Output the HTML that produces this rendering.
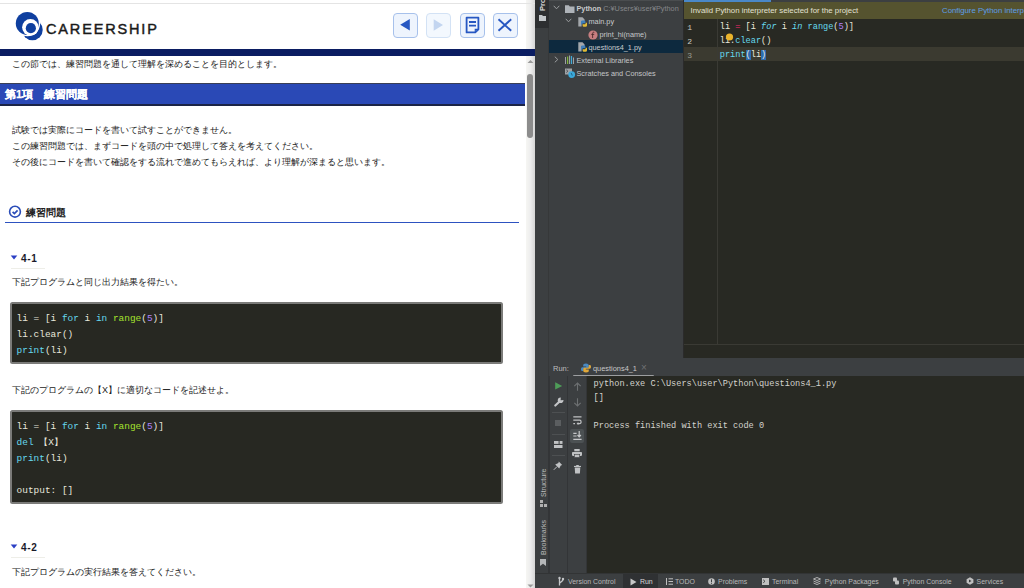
<!DOCTYPE html>
<html lang="ja">
<head>
<meta charset="utf-8">
<style>
*{box-sizing:border-box;margin:0;padding:0}
html,body{width:1024px;height:588px;overflow:hidden;background:#fff}
body{position:relative;font-family:"Liberation Sans",sans-serif}
.a{position:absolute}
.jp{font-size:9.05px;line-height:16px;color:#222;white-space:nowrap}
.btn{position:absolute;top:13px;width:25px;height:25px;border:1.6px solid #a7c1eb;border-radius:4px;background:#eef4fd}
.code{position:absolute;left:10px;width:493px;background:#272822;border:2px solid #7b7b79;border-radius:2.5px;padding:7px 0 0 4.6px;font-family:"Liberation Mono",monospace;font-size:9.45px;line-height:16px;color:#e6e6dc;white-space:pre}
.kw{color:#66d9ef}.fn{color:#a6e22e}.nu{color:#ae81ff}
.ide{font-family:"Liberation Sans",sans-serif;font-size:8px;white-space:nowrap}
.mono{font-family:"Liberation Mono",monospace}
</style>
</head>
<body>
<!-- LEFT PAGE -->
<div class="a" style="left:0;top:0;width:535px;height:588px;background:#fff;overflow:hidden">
  
  <!-- logo -->
  <svg class="a" style="left:0;top:0" width="60" height="50" viewBox="0 0 60 50">
    <defs><mask id="cm"><rect width="60" height="50" fill="#fff"/><circle cx="27.3" cy="23.4" r="12.8" fill="#000"/><circle cx="30.4" cy="27.3" r="8.3" fill="#000"/></mask></defs>
    <circle cx="27.3" cy="23.4" r="11.5" fill="#0f3f9f"/>
    <circle cx="32.4" cy="29.9" r="10.3" fill="#0f3f9f" mask="url(#cm)"/>
    <circle cx="30.4" cy="27.3" r="8.3" fill="#fff"/>
    <circle cx="30.85" cy="28.2" r="5.1" fill="#0f3f9f"/>
  </svg>
  <div class="a" style="left:46px;top:19.7px;font-size:14.5px;font-weight:normal;-webkit-text-stroke:0.45px #1a1a1a;letter-spacing:1.85px;color:#1a1a1a;line-height:18px">CAREERSHIP</div>
  <!-- buttons -->
  <div class="btn" style="left:393px"><svg width="22" height="22" viewBox="0 0 22 22" style="position:absolute;left:0;top:0"><path d="M6.2 10.7 L15.8 4.9 V16.5 Z" fill="#2757c2"/></svg></div>
  <div class="btn" style="left:426px;border-color:#d3e2f5;background:#f3f8fe"><svg width="22" height="22" viewBox="0 0 22 22" style="position:absolute;left:0;top:0"><path d="M6.7 5.3 L16 11 L6.7 16.7 Z" fill="#c3d5f0"/></svg></div>
  <div class="btn" style="left:459.5px"><svg width="22" height="22" viewBox="0 0 22 22" style="position:absolute;left:0;top:0"><path d="M5.6 3.7 H17.4 V15.4 L14.3 18.4 H5.6 Z" fill="none" stroke="#2757c2" stroke-width="1.8" stroke-linejoin="round"/><path d="M8 8 H15 M8 11.6 H15" stroke="#2757c2" stroke-width="1.8"/><path d="M14.3 18.4 V15.4 H17.4" fill="none" stroke="#2757c2" stroke-width="1.2"/></svg></div>
  <div class="btn" style="left:493px"><svg width="22" height="22" viewBox="0 0 22 22" style="position:absolute;left:0;top:0"><path d="M4.5 5.3 L17.2 16.8 M17.2 5.3 L4.5 16.8" stroke="#2757c2" stroke-width="1.9"/></svg></div>
  <!-- navy bar -->
  <div class="a" style="left:0;top:49px;width:535px;height:6.5px;background:#0b1d62"></div>
  <!-- scrollbar -->
  <div class="a" style="left:525.5px;top:0;width:9.5px;height:588px;background:linear-gradient(90deg,#f6f6f3 0%,#ededed 50%,#d6d6d6 100%)"></div>
  <div class="a" style="left:0;top:49px;width:535px;height:6.5px;background:#0b1d62"></div>
  <div class="a" style="left:0;top:3px;width:535px;height:1px;background:#e4e4e4"></div>
  <div class="a" style="left:527.2px;top:74px;width:5.8px;height:64px;background:#8c8c8c;border-radius:3px"></div>
  <svg class="a" style="left:526px;top:58px" width="9" height="6"><path d="M1.5 5 L4.5 2 L7.5 5 Z" fill="#9a9a9a"/></svg>
  <svg class="a" style="left:526px;top:582.5px" width="9" height="6"><path d="M1.5 1.5 L4.5 4.5 L7.5 1.5 Z" fill="#9a9a9a"/></svg>

  <div class="a jp" style="left:12px;top:56px">この節では、練習問題を通して理解を深めることを目的とします。</div>
  <!-- banner -->
  <div class="a" style="left:0;top:83px;width:525.2px;height:22.5px;background:#2a49b6;border-top:1px solid #3a3f55;border-bottom:2px solid #1b2446"></div>
  <div class="a" style="left:5px;top:86px;font-size:10.8px;line-height:16px;font-weight:bold;-webkit-text-stroke:0.25px #fff;color:#fff;white-space:nowrap">第1項　練習問題</div>

  <div class="a jp" style="left:12px;top:122px">試験では実際にコードを書いて試すことができません。<br>この練習問題では、まずコードを頭の中で処理して答えを考えてください。<br>その後にコードを書いて確認をする流れで進めてもらえれば、より理解が深まると思います。</div>

  <!-- section heading -->
  <svg class="a" style="left:8px;top:205px" width="14" height="14" viewBox="0 0 14 14"><circle cx="7" cy="6.7" r="5.4" fill="none" stroke="#2a4cb8" stroke-width="1.6"/><path d="M4.6 6.8 L6.4 8.5 L9.6 5.3" fill="none" stroke="#2a4cb8" stroke-width="1.7"/></svg>
  <div class="a" style="left:26px;top:205px;font-size:10px;line-height:16px;font-weight:bold;color:#222;white-space:nowrap">練習問題</div>
  <div class="a" style="left:5px;top:221.5px;width:514px;height:1.5px;background:#2d52c0"></div>

  <!-- 4-1 -->
  <svg class="a" style="left:10px;top:255px" width="8" height="5"><path d="M0.7 0.5 H7.3 L4 4.6 Z" fill="#2b3fc4"/></svg>
  <div class="a" style="left:21px;top:251px;font-size:10px;line-height:16px;font-weight:bold;letter-spacing:0.7px;color:#1a1a2a">4-1</div>
  <div class="a" style="left:11px;top:268px;width:34px;height:1px;background:#eeeee8"></div>
  <div class="a jp" style="left:12px;top:274px">下記プログラムと同じ出力結果を得たい。</div>

  <div class="code" style="top:302px;height:62px">li = [i <span class="kw">for</span> i <span class="kw">in</span> <span class="fn">range</span>(<span class="nu">5</span>)]
li.clear()
<span class="kw">print</span>(li)</div>

  <div class="a jp" style="left:12px;top:382px">下記のプログラムの【X】に適切なコードを記述せよ。</div>

  <div class="code" style="top:410px;height:94px">li = [i <span class="kw">for</span> i <span class="kw">in</span> <span class="fn">range</span>(<span class="nu">5</span>)]
<span class="kw">del</span> 【X】
<span class="kw">print</span>(li)

output: []</div>

  <!-- 4-2 -->
  <svg class="a" style="left:10px;top:544px" width="8" height="5"><path d="M0.7 0.5 H7.3 L4 4.6 Z" fill="#2b3fc4"/></svg>
  <div class="a" style="left:21px;top:540px;font-size:10px;line-height:16px;font-weight:bold;letter-spacing:0.7px;color:#1a1a2a">4-2</div>
  <div class="a" style="left:11px;top:557px;width:34px;height:1px;background:#eeeee8"></div>
  <div class="a jp" style="left:12px;top:564px">下記プログラムの実行結果を答えてください。</div>
</div>

<!-- IDE -->
<div class="a" id="ide" style="left:535px;top:0;width:489px;height:588px;background:#3c3f41;overflow:hidden">
  <!-- left tool strip (x 535-549) -->
  <div class="a" style="left:0;top:0;width:14px;height:573px;background:#3c3f41;border-right:1px solid #363839"></div>
  <div class="a" style="left:0;top:0;width:14px;height:28px;background:#2d2f31"></div>
  <div class="a ide" style="left:3.2px;top:11px;transform:rotate(-90deg);transform-origin:0 0;color:#dcdcdc;font-size:7.5px;font-weight:bold;line-height:10px">Proje</div>
  <svg class="a" style="left:3.8px;top:15.2px" width="7.2" height="6"><path d="M0 0 H3 L4 1 H7.2 V6 H0 Z" fill="#c3c7ca"/></svg>
  <div class="a ide" style="left:4px;top:497px;transform:rotate(-90deg);transform-origin:0 0;color:#bbbbbb;font-size:7px;line-height:10px">Structure</div>
  <svg class="a" style="left:5px;top:500px" width="7" height="7"><rect x="0" y="0" width="3" height="3" fill="#b0b0b0"/><rect x="0" y="4" width="3" height="3" fill="#b0b0b0"/><rect x="4" y="4" width="3" height="3" fill="#b0b0b0"/></svg>
  <div class="a ide" style="left:4px;top:555px;transform:rotate(-90deg);transform-origin:0 0;color:#bbbbbb;font-size:7px;line-height:10px">Bookmarks</div>
  <svg class="a" style="left:4.5px;top:558.5px" width="6" height="7"><path d="M0 0 H6 V7 L3 4.8 L0 7 Z" fill="#b4b6b8"/></svg>

  <!-- project tree (x 549-683) -->
  <div class="a" style="left:14px;top:0;width:134px;height:1px;background:#4a4d4f"></div>
  <div class="a" style="left:14px;top:40.3px;width:134px;height:12.5px;background:#0d293e"></div>
  <svg class="a" style="left:18px;top:5px" width="7" height="5"><path d="M0.7 0.8 L3.5 3.8 L6.3 0.8" fill="none" stroke="#9a9d9f" stroke-width="1"/></svg>
  <svg class="a" style="left:30px;top:4.5px" width="10" height="8"><path d="M0 0.3 H3.8 L4.8 1.5 H9.5 V8 H0 Z" fill="#aeb3b8"/></svg>
  <div class="a ide" style="left:41.5px;top:3px;line-height:12px;color:#c9cbcd;font-weight:bold;font-size:7.3px">Python <span style="color:#85878a;font-weight:normal">C:¥Users¥user¥Python</span></div>

  <svg class="a" style="left:30px;top:18px" width="7" height="5"><path d="M0.7 0.8 L3.5 3.8 L6.3 0.8" fill="none" stroke="#9a9d9f" stroke-width="1"/></svg>
  <svg class="a" style="left:43px;top:16.5px" width="10" height="10"><path d="M0.3 0.3 H4.5 L6.6 2.4 V4 H3.6 V9.6 H0.3 Z" fill="#a3a7ab"/><path d="M3 7.6 V5 Q3 3.6 4.4 3.6 H6.2 Q7.4 3.6 7.4 4.8 V6.2 H5 Q4.4 6.2 4.4 6.8 V7.6 Z" fill="#3f80bd"/><path d="M9 5.8 V8.4 Q9 9.8 7.6 9.8 H5.8 Q4.6 9.8 4.6 8.6 V7.2 H7 Q7.6 7.2 7.6 6.6 V5.8 Z" fill="#e2bb36"/></svg>
  <div class="a ide" style="left:53.5px;top:16px;line-height:12px;color:#c9cbcd;font-size:7.3px">main.py</div>

  <svg class="a" style="left:53px;top:30px" width="10" height="10"><circle cx="5" cy="5" r="4.6" fill="#c77e80"/><path d="M6.3 2.3 C5 2 4.6 2.6 4.6 3.6 V8 M3.3 4.4 H6.2" fill="none" stroke="#4b2a2b" stroke-width="0.9"/></svg>
  <div class="a ide" style="left:64.5px;top:29px;line-height:12px;color:#c4c6c8;font-size:7.3px">print_hi(name)</div>

  <svg class="a" style="left:43px;top:42px" width="10" height="10"><path d="M0.3 0.3 H4.5 L6.6 2.4 V4 H3.6 V9.6 H0.3 Z" fill="#a3a7ab"/><path d="M3 7.6 V5 Q3 3.6 4.4 3.6 H6.2 Q7.4 3.6 7.4 4.8 V6.2 H5 Q4.4 6.2 4.4 6.8 V7.6 Z" fill="#3f80bd"/><path d="M9 5.8 V8.4 Q9 9.8 7.6 9.8 H5.8 Q4.6 9.8 4.6 8.6 V7.2 H7 Q7.6 7.2 7.6 6.6 V5.8 Z" fill="#e2bb36"/></svg>
  <div class="a ide" style="left:53.5px;top:41.5px;line-height:12px;color:#c9cbcd;font-size:7.3px">questions4_1.py</div>

  <svg class="a" style="left:19.3px;top:56px" width="5" height="7"><path d="M0.8 0.7 L3.8 3.5 L0.8 6.3" fill="none" stroke="#9a9d9f" stroke-width="1"/></svg>
  <svg class="a" style="left:30px;top:54.5px" width="10" height="10"><rect x="0" y="2" width="1" height="7" fill="#9ea2a6"/><rect x="2" y="1.5" width="1.2" height="7.5" fill="#7fb33d"/><rect x="4" y="0.5" width="1" height="8.5" fill="#9ea2a6"/><rect x="5.8" y="1" width="1.3" height="8" fill="#41a9d6"/><rect x="8" y="2.5" width="1" height="6.5" fill="#9ea2a6"/></svg>
  <div class="a ide" style="left:41.5px;top:54.5px;line-height:12px;color:#c4c6c8;font-size:7.3px">External Libraries</div>

  <svg class="a" style="left:30px;top:67.5px" width="11" height="11"><rect x="0" y="0.5" width="7" height="6" fill="#9ea2a6"/><path d="M1.2 1.8 L3 3.2 L1.2 4.6" fill="none" stroke="#4a4d50" stroke-width="0.8"/><circle cx="6.7" cy="6.6" r="3.4" fill="#3aa8da"/><path d="M6.2 5 L7.3 7.6" stroke="#1f5670" stroke-width="0.8"/></svg>
  <div class="a ide" style="left:41.5px;top:67.5px;line-height:12px;color:#c4c6c8;font-size:7.3px">Scratches and Consoles</div>

  <!-- tree/editor border -->
  <div class="a" style="left:148px;top:0;width:1px;height:358px;background:#2b2b2b"></div>

  <!-- editor (x 684-1024) -->
  <div class="a" style="left:149px;top:0;width:340px;height:358px;background:#282923"></div>
  <div class="a" style="left:149px;top:0;width:340px;height:2px;background:#3c3f41"></div>
  <div class="a" style="left:149px;top:0;width:87px;height:1.6px;background:#4a88c7"></div>
  <div class="a" style="left:149px;top:2px;width:340px;height:16.5px;background:#55532f"></div>
  <div class="a ide" style="left:155.5px;top:4.5px;line-height:12px;color:#e2e2d4;font-size:7.8px">Invalid Python interpreter selected for the project</div>
  <div class="a ide" style="left:407px;top:4.5px;line-height:12px;color:#5d9ee8;font-size:7.8px">Configure Python interpreter</div>
  <!-- current line -->
  <div class="a" style="left:149px;top:47.4px;width:340px;height:14.1px;background:#3b3a30"></div>
  <!-- gutter line -->
  <div class="a" style="left:181.5px;top:18.5px;width:1px;height:326px;background:#3a3a34"></div>
  <div class="a" style="left:149px;top:344px;width:340px;height:1px;background:#3a3a34"></div>
  <div class="a mono" style="left:152.2px;top:20.5px;font-size:8.1px;line-height:14px;color:#c8c8c0;white-space:pre">1
2
<span style="color:#9a9a90">3</span></div>
  <div class="a mono" style="left:184.8px;top:20px;font-size:8.6px;line-height:14px;color:#e8e8dc;white-space:pre">li <span style="color:#f92672">=</span> [i <i style="color:#66d9ef">for</i> i <i style="color:#66d9ef">in</i> <span style="color:#66d9ef">range</span>(<span style="color:#ae81ff">5</span>)]
li.<span style="color:#66d9ef">clear</span>()
<span style="color:#66d9ef">print</span><span style="background:#2d6bb0">(</span>li<span style="background:#2d6bb0">)</span></div>
  <svg class="a" style="left:190px;top:33px" width="9" height="9"><circle cx="4.5" cy="4" r="3.6" fill="#e9b32c"/></svg>

  <!-- run header -->
  <div class="a" style="left:14px;top:357.5px;width:134px;height:1px;background:#36383a"></div>
  <div class="a" style="left:14px;top:358px;width:475px;height:17.5px;background:#3c3f41"></div>
  <div class="a ide" style="left:18px;top:362.5px;line-height:12px;color:#bdbdbd;font-size:7.5px">Run:</div>
  <svg class="a" style="left:46px;top:363px" width="10" height="10"><path d="M5 0.5 C2.5 0.5 2.2 1.5 2.2 2.5 V3.6 H5.2 V4.2 H1.4 C0.4 4.2 0 5 0 6.2 C0 7.4 0.5 8 1.4 8 H2.2 V6.8 C2.2 5.9 3 5.2 3.8 5.2 H6.4 C7.2 5.2 7.8 4.6 7.8 3.8 V2.5 C7.8 1.5 7 0.5 5 0.5 Z" fill="#4a8ac2"/><path d="M5 9.5 C7.5 9.5 7.8 8.5 7.8 7.5 V6.4 H4.8 V5.8 H8.6 C9.6 5.8 10 5 10 3.8 C10 2.6 9.5 2 8.6 2 H7.8 V3.2 C7.8 4.1 7 4.8 6.2 4.8 H3.6 C2.8 4.8 2.2 5.4 2.2 6.2 V7.5 C2.2 8.5 3 9.5 5 9.5 Z" fill="#e0a83a"/></svg>
  <div class="a ide" style="left:58px;top:362.5px;line-height:12px;color:#c8c8c8;font-size:7.4px">questions4_1</div>
  <div class="a ide" style="left:106px;top:361.5px;line-height:12px;color:#6f7173;font-size:10px">×</div>
  <div class="a" style="left:38px;top:374.5px;width:81px;height:2px;background:#9c9ea0;border-radius:1px"></div>

  <!-- run toolbar columns -->
  <div class="a" style="left:14px;top:375.5px;width:19px;height:197.5px;background:#3c3f41;border-right:1px solid #333537"></div>
  <div class="a" style="left:33px;top:375.5px;width:18.5px;height:197.5px;background:#3c3f41;border-right:1px solid #333537"></div>
  <!-- console -->
  <div class="a" style="left:51.5px;top:375.5px;width:438px;height:197.5px;background:#282923"></div>
  <div class="a mono" style="left:58.6px;top:377px;font-size:8.62px;line-height:14px;color:#d4d4ce;white-space:pre">python.exe C:\Users\user\Python\questions4_1.py
[]

Process finished with exit code 0</div>

  <!-- toolbar icons col1 center x=23.5 (558.5) -->
  <div class="a" style="left:13px;top:375.5px;width:2px;height:197.5px;background:#333537"></div>
  <svg class="a" style="left:20px;top:381.5px" width="8" height="8"><path d="M0.2 0.2 L7.2 3.9 L0.2 7.6 Z" fill="#4e9d58"/></svg>
  <svg class="a" style="left:19px;top:397px" width="10" height="10"><path d="M1.3 8.6 L5 4.9" stroke="#c3c5c7" stroke-width="2.1" stroke-linecap="round"/><circle cx="6.6" cy="3.3" r="2.8" fill="#c3c5c7"/><path d="M6.6 3.3 L6.9 -0.5 L10.5 -0.5 L10.5 3 Z" fill="#3c3f41"/></svg>
  <div class="a" style="left:17px;top:412px;width:13px;height:1px;background:#4d5052"></div>
  <div class="a" style="left:20px;top:420px;width:6.3px;height:6.3px;background:#5b5e60"></div>
  <div class="a" style="left:17px;top:433.5px;width:13px;height:1px;background:#4d5052"></div>
  <svg class="a" style="left:19px;top:441px" width="8.5" height="7"><rect x="0" y="0" width="4.6" height="2.9" fill="#c0c2c4"/><rect x="5.6" y="0" width="2.9" height="2.9" fill="#c0c2c4"/><rect x="0" y="4" width="8.5" height="3" fill="#c0c2c4"/></svg>
  <div class="a" style="left:17px;top:454.5px;width:13px;height:1px;background:#4d5052"></div>
  <svg class="a" style="left:18px;top:461px" width="10" height="10"><path d="M0.8 8.8 L4 5.6" stroke="#c0c2c4" stroke-width="1"/><path d="M5.8 0.6 L9.2 4 L7.8 4.4 L6.2 7.6 L2.2 3.6 L5.4 2 Z" fill="#c0c2c4"/></svg>
  <!-- col2 center x=42 (577) -->
  <svg class="a" style="left:37.5px;top:381.5px" width="9" height="9"><path d="M4.5 8.8 V1 M1.3 4.2 L4.5 1 L7.7 4.2" fill="none" stroke="#6d7072" stroke-width="1.1"/></svg>
  <svg class="a" style="left:37.5px;top:398px" width="9" height="9"><path d="M4.5 0.2 V8 M1.3 4.8 L4.5 8 L7.7 4.8" fill="none" stroke="#6d7072" stroke-width="1.1"/></svg>
  <svg class="a" style="left:37.5px;top:415.5px" width="9" height="9"><path d="M0.3 0.8 H8.5 M0.3 4.2 H6.6 C8.6 4.2 8.6 7.6 6.6 7.6 H4.6 M0.3 7.6 H2" fill="none" stroke="#c0c2c4" stroke-width="1.2"/><path d="M5.4 5.9 L3.6 7.6 L5.4 9.2 Z" fill="#c0c2c4"/></svg>
  <div class="a" style="left:35px;top:429px;width:13.7px;height:13.7px;background:#4c5153;border-radius:2px"></div>
  <svg class="a" style="left:37.5px;top:431px" width="9" height="9"><path d="M0.3 8.3 H8.6 M0.3 5 H3.6 M0.3 2.3 H3.6 M6.2 0 V5.8 M4.5 4 L6.2 5.9 L7.9 4" fill="none" stroke="#c6c8ca" stroke-width="1.2"/></svg>
  <svg class="a" style="left:37px;top:449px" width="10" height="9"><rect x="2.3" y="0" width="5.4" height="2.3" fill="#c0c2c4"/><rect x="0" y="2.9" width="10" height="4" rx="0.8" fill="#c0c2c4"/><rect x="2.3" y="5.5" width="5.4" height="3" fill="#c0c2c4" stroke="#3c3f41" stroke-width="0.6"/></svg>
  <svg class="a" style="left:38.5px;top:465px" width="7" height="8.5"><rect x="0" y="0.9" width="7" height="1.1" fill="#c0c2c4"/><rect x="2.2" y="0" width="2.6" height="1" fill="#c0c2c4"/><path d="M0.7 2.6 H6.3 L5.9 8.5 H1.1 Z" fill="#c0c2c4"/></svg>

  <!-- bottom bar -->
  <div class="a" style="left:0;top:573px;width:489px;height:15px;background:#3c3f41;border-top:1px solid #323435"></div>
  <div class="a" style="left:88.4px;top:573.5px;width:35px;height:14.5px;background:#2f3133"></div>
  <svg class="a" style="left:22px;top:576px" width="9" height="11"><path d="M2.5 2 V9.5 M2.5 7.6 C2.5 5.8 6 5.8 6 3.6 V3" fill="none" stroke="#c4c6c8" stroke-width="1.3"/><circle cx="2.5" cy="2" r="1.2" fill="#c4c6c8"/><circle cx="6" cy="3" r="1.2" fill="#c4c6c8"/></svg>
  <div class="a ide" style="left:33px;top:575.5px;line-height:12px;color:#b8b8b8;font-size:6.95px">Version Control</div>
  <svg class="a" style="left:95px;top:577.5px" width="7" height="8"><path d="M0.5 0.5 L6.5 4 L0.5 7.5 Z" fill="#c8c8c8"/></svg>
  <div class="a ide" style="left:105px;top:575.5px;line-height:12px;color:#d8d8d8;font-size:6.95px">Run</div>
  <svg class="a" style="left:131px;top:577.5px" width="7" height="7"><path d="M0.5 0 V7 M2.5 0.8 H7 M2.5 3.5 H7 M2.5 6.2 H7" stroke="#c0c0c0" stroke-width="1"/></svg>
  <div class="a ide" style="left:140px;top:575.5px;line-height:12px;color:#b8b8b8;font-size:6.95px">TODO</div>
  <svg class="a" style="left:173px;top:577.5px" width="7" height="7"><circle cx="3.5" cy="3.5" r="3.3" fill="#c0c0c0"/><rect x="3" y="1.3" width="1" height="2.8" fill="#3c3f41"/><rect x="3" y="4.8" width="1" height="1" fill="#3c3f41"/></svg>
  <div class="a ide" style="left:183px;top:575.5px;line-height:12px;color:#b8b8b8;font-size:6.95px">Problems</div>
  <svg class="a" style="left:227px;top:577.5px" width="7" height="7"><rect x="0" y="0" width="7" height="7" fill="#c0c0c0"/><path d="M1.2 1.8 L3 3.3 L1.2 4.8" fill="none" stroke="#3c3f41" stroke-width="0.9"/></svg>
  <div class="a ide" style="left:237px;top:575.5px;line-height:12px;color:#b8b8b8;font-size:6.95px">Terminal</div>
  <svg class="a" style="left:278px;top:577px" width="8" height="8"><path d="M4 0.5 L7.5 2 L4 3.5 L0.5 2 Z M0.5 4 L4 5.5 L7.5 4 M0.5 6 L4 7.5 L7.5 6" fill="none" stroke="#c0c0c0" stroke-width="0.9"/></svg>
  <div class="a ide" style="left:289.8px;top:575.5px;line-height:12px;color:#b8b8b8;font-size:6.95px">Python Packages</div>
  <svg class="a" style="left:357px;top:577px" width="8" height="8"><rect x="1" y="0.5" width="4" height="4" rx="1" fill="#c0c0c0"/><rect x="3" y="3.5" width="4" height="4" rx="1" fill="#c0c0c0"/></svg>
  <div class="a ide" style="left:367.7px;top:575.5px;line-height:12px;color:#b8b8b8;font-size:6.95px">Python Console</div>
  <svg class="a" style="left:430.5px;top:577px" width="8" height="8"><path d="M4 0.3 L7.4 2.2 V5.8 L4 7.7 L0.6 5.8 V2.2 Z" fill="#c0c0c0"/><path d="M3 2.5 L5.5 4 L3 5.5 Z" fill="#3c3f41"/></svg>
  <div class="a ide" style="left:441.6px;top:575.5px;line-height:12px;color:#b8b8b8;font-size:6.95px">Services</div>
</div>
</body>
</html>
